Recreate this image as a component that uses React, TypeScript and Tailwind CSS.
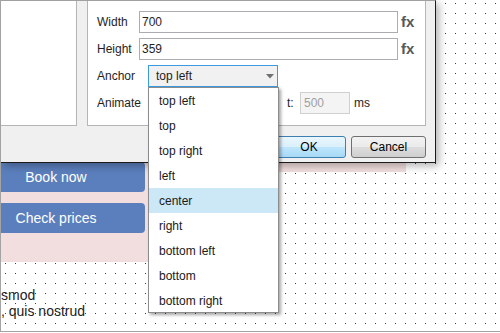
export default function App() {
  const items = [
    "top left",
    "top",
    "top right",
    "left",
    "center",
    "right",
    "bottom left",
    "bottom",
    "bottom right",
  ];
  return (
    <div className="relative isolate w-[500px] h-[332px] overflow-hidden border-l border-b border-[#a3a3a3] bg-white font-['Liberation_Sans',Arial,sans-serif] text-[#1e1e1e] before:content-[''] before:absolute before:inset-0 before:-z-10 before:bg-[linear-gradient(to_right,#2b2bd6_1px,transparent_1px)] before:bg-[length:10px_10px] before:bg-[position:4px_0px] before:[mask-image:linear-gradient(to_bottom,#000_1px,transparent_1px)] before:[mask-size:10px_10px] before:[mask-position:0px_3px]">
      {/* page content */}
      <div className="flex items-start">
        <div className="w-[155px] bg-[#f2dede] pt-[162px] pb-[29px]">
          <div className="-ml-[34px] w-[178px] h-[30px] rounded-[4px] bg-[#5b7fbd] flex items-center justify-center text-[14px] text-white">
            Book now
          </div>
          <div className="-ml-[34px] w-[178px] h-[30px] mt-[11px] rounded-[4px] bg-[#5b7fbd] flex items-center justify-center text-[14px] text-white">
            Check prices
          </div>
        </div>
        <div className="w-[250px] h-[172px] bg-[#f2dede]" />
      </div>
      <div className="mt-[25px] text-[14px] leading-[16px] text-[#222]">
        <div>smod</div>
        <div>, quis nostrud</div>
      </div>

      {/* dialog window */}
      <div className="absolute left-0 top-0 w-[435px] h-[163px] bg-[#f0f0f0] border-t border-t-[#a0a0a0] border-r border-r-[#1b1b1b] border-b border-b-[#1b1b1b] shadow-[3px_3px_8px_rgba(0,0,0,0.3)] flex flex-col text-[12px]">
        <div className="flex h-[125px]">
          <div className="w-[76px] h-[125px] bg-white border-r border-b border-[#b5b5b5]" />
          <div className="ml-[10px] w-[339px] h-[125px] bg-white border-l border-r border-b border-[#b5b5b5] pl-[9px] pt-[10px]">
            <div className="flex items-center h-[22px]">
              <div className="w-[42px]">Width</div>
              <div className="w-[259px] h-[22px] border border-[#abadb3] bg-white pl-[2px] leading-[20px]">700</div>
              <div className="ml-[3px] text-[15px] font-bold text-[#585858]">fx</div>
            </div>
            <div className="flex items-center h-[22px] mt-[5px]">
              <div className="w-[42px]">Height</div>
              <div className="w-[259px] h-[22px] border border-[#abadb3] bg-white pl-[2px] leading-[20px]">359</div>
              <div className="ml-[3px] text-[15px] font-bold text-[#585858]">fx</div>
            </div>
            <div className="flex items-center h-[22px] mt-[5px]">
              <div className="w-[51px]">Anchor</div>
              <div className="w-[130px] h-[22px] border border-[#3c9be0] bg-[#f1f1f1] pl-[7px] pr-[3px] flex items-center justify-between">
                <span>top left</span>
                <svg width="8" height="5" viewBox="0 0 8 5">
                  <path d="M0 0H8L4 4.5Z" fill="#707070" />
                </svg>
              </div>
            </div>
            <div className="flex items-center h-[22px] mt-[5px]">
              <div className="w-[190px]">Animate</div>
              <div className="w-[13px]">t:</div>
              <div className="w-[50px] h-[22px] border border-[#d0d0d0] bg-[#f4f4f4] pl-[3px] leading-[20px] text-[#a0a0a0]">500</div>
              <div className="ml-[4px]">ms</div>
            </div>
          </div>
        </div>
        <div className="flex justify-end gap-[5px] pr-[9px] mt-[10px]">
          <div className="w-[74px] h-[22px] rounded-[3px] border border-[#3c7fb1] bg-[linear-gradient(#eaf6fd,#d9f0fc_50%,#bee6fd_51%,#a7d9f5)] flex items-center justify-center text-black">
            OK
          </div>
          <div className="w-[75px] h-[22px] rounded-[3px] border border-[#707070] bg-[linear-gradient(#f2f2f2,#ebebeb_50%,#dddddd_51%,#cfcfcf)] flex items-center justify-center text-black">
            Cancel
          </div>
        </div>
      </div>

      {/* dropdown list */}
      <div className="absolute left-[147px] top-[87px] w-[131px] h-[226px] bg-white border border-[#8c8c8c] shadow-[2px_2px_3px_rgba(0,0,0,0.35)] text-[12px] text-[#1a1a1a]">
        {items.map((it) => (
          <div
            key={it}
            className={
              it === "center"
                ? "h-[25px] flex items-center pl-[10px] bg-[#cce8f6]"
                : "h-[25px] flex items-center pl-[10px]"
            }
          >
            {it}
          </div>
        ))}
      </div>
    </div>
  );
}
